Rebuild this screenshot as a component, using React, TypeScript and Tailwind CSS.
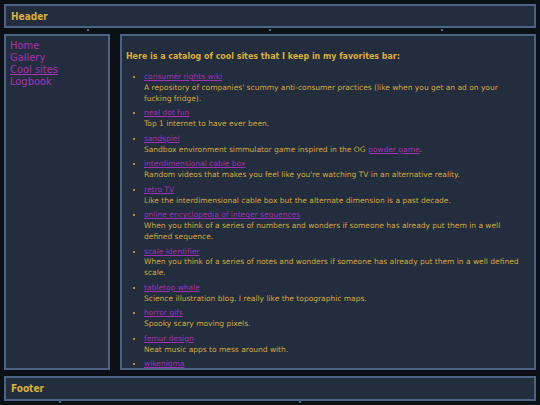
import React from 'react';

type Site = {
  name: string;
  desc?: React.ReactNode;
};

const sites: Site[] = [
  {
    name: 'consumer rights wiki',
    desc: "A repository of companies' scummy anti-consumer practices (like when you get an ad on your fucking fridge).",
  },
  { name: 'neal dot fun', desc: 'Top 1 internet to have ever been.' },
  {
    name: 'sandspiel',
    desc: (
      <>
        Sandbox environment simmulator game inspired in the OG{' '}
        <a href="#" className="text-[#a12fb3] underline">
          powder game
        </a>
        .
      </>
    ),
  },
  {
    name: 'interdimensional cable box',
    desc: "Random videos that makes you feel like you're watching TV in an alternative reality.",
  },
  {
    name: 'retro TV',
    desc: 'Like the interdimensional cable box but the alternate dimension is a past decade.',
  },
  {
    name: 'online encyclopedia of integer sequences',
    desc: 'When you think of a series of numbers and wonders if someone has already put them in a well defined sequence.',
  },
  {
    name: 'scale identifier',
    desc: 'When you think of a series of notes and wonders if someone has already put them in a well defined scale.',
  },
  {
    name: 'tabletop whale',
    desc: 'Science illustration blog. I really like the topographic maps.',
  },
  { name: 'horror gifs', desc: 'Spooky scary moving pixels.' },
  { name: 'femur design', desc: 'Neat music apps to mess around with.' },
  { name: 'wikenigma' },
];

const nav = ['Home', 'Gallery', 'Cool sites', 'Logbook'];

const App = () => {
  return (
    <div className="w-[540px] h-[405px] overflow-hidden bg-[#0a1016] bg-[radial-gradient(circle_at_88px_30px,#3a6a9a_0.8px,transparent_1.5px),radial-gradient(circle_at_270px_30px,#3a6a9a_0.8px,transparent_1.5px),radial-gradient(circle_at_442px_30px,#3a6a9a_0.8px,transparent_1.5px),radial-gradient(circle_at_60px_402px,#3a6a9a_0.8px,transparent_1.5px),radial-gradient(circle_at_300px_402px,#3a6a9a_0.8px,transparent_1.5px)] p-[4px] flex flex-col gap-[6px] font-['DejaVu_Sans_Condensed','DejaVu_Sans',sans-serif]">
      {/* Header */}
      <header className="h-[24px] shrink-0 bg-[#222d3d] border-2 border-[#4d6383] flex items-center px-[5px]">
        <span className="text-[#dcb033] text-[10px] font-bold">Header</span>
      </header>

      <div className="flex-1 min-h-0 flex gap-[10px]">
        {/* Sidebar */}
        <nav className="w-[106px] shrink-0 bg-[#222d3d] border-2 border-[#4d6383] px-[4px] pt-[4px] flex flex-col">
          {nav.map((item) => (
            <a
              key={item}
              href="#"
              className={`text-[#a531b8] text-[11px] leading-[12px] ${item === 'Cool sites' ? 'underline' : ''}`}
            >
              {item}
            </a>
          ))}
        </nav>

        {/* Content */}
        <main className="flex-1 min-w-0 bg-[#222d3d] border-2 border-[#4d6383] pl-[4px] pr-[8px] pt-[14px] overflow-hidden">
          <h1 className="text-[#dcb033] text-[8.8px] font-bold leading-[12px] mb-[10px]">
            Here is a catalog of cool sites that I keep in my favorites bar:
          </h1>
          <ul className="list-disc pl-[18px] marker:text-[#dcb033] font-['DejaVu_Sans',sans-serif] text-[7.5px] leading-[10.75px] flex flex-col gap-[4px]">
            {sites.map((site) => (
              <li key={site.name}>
                <a href="#" className="text-[#a12fb3] underline">
                  {site.name}
                </a>
                {site.desc && (
                  <>
                    <br />
                    <span className="text-[#d6a93a]">{site.desc}</span>
                  </>
                )}
              </li>
            ))}
          </ul>
        </main>
      </div>

      {/* Footer */}
      <footer className="h-[25px] shrink-0 bg-[#222d3d] border-2 border-[#4d6383] flex items-center px-[5px]">
        <span className="text-[#dcb033] text-[10px] font-bold">Footer</span>
      </footer>
    </div>
  );
};

export default App;
